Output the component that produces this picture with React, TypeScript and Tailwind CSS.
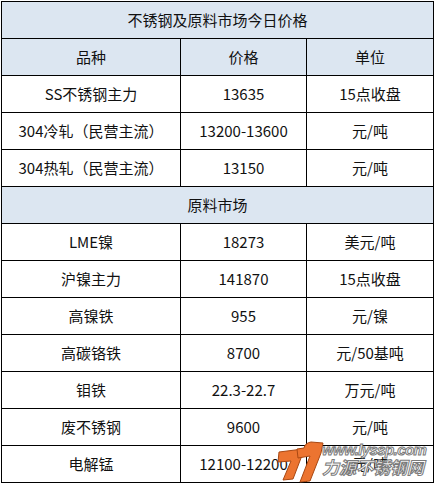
const steelRows = [
  { name: 'SS不锈钢主力', price: '13635', unit: '15点收盘' },
  { name: '304冷轧（民营主流）', price: '13200-13600', unit: '元/吨' },
  { name: '304热轧（民营主流）', price: '13150', unit: '元/吨' },
]

const rawRows = [
  { name: 'LME镍', price: '18273', unit: '美元/吨' },
  { name: '沪镍主力', price: '141870', unit: '15点收盘' },
  { name: '高镍铁', price: '955', unit: '元/镍' },
  { name: '高碳铬铁', price: '8700', unit: '元/50基吨' },
  { name: '钼铁', price: '22.3-22.7', unit: '万元/吨' },
  { name: '废不锈钢', price: '9600', unit: '元/吨' },
  { name: '电解锰', price: '12100-12200', unit: '元/吨' },
]

function Row({ cells }: { cells: string[] }) {
  return (
    <tr className="h-[37px]">
      {cells.map((c, i) => (
        <td key={i} className="border border-black text-center align-middle p-0 whitespace-nowrap">
          {c}
        </td>
      ))}
    </tr>
  )
}

function Watermark() {
  return (
    <>
      {/* 77 logo */}
      <svg
        className="absolute left-[274px] top-[440px] pointer-events-none"
        width="52"
        height="46"
        viewBox="274 440 52 46"
      >
        <path
          d="M279 452 L303 449 L301 458 L293 479 L283 480 L291 461 L278 462 Z"
          fill="#ec7430"
          stroke="#a94812"
          strokeWidth="1"
        />
        <path
          d="M297 449 L304 448 Q305 443 311 442 L323 443 L321 453 L310 481 L300 482 L310 456 L298 458 Z"
          fill="#ec7430"
          stroke="#a94812"
          strokeWidth="1"
        />
      </svg>
      <div className="absolute left-[322px] top-[442px] flex flex-col items-start pointer-events-none italic font-bold leading-none [-webkit-text-stroke:1px_#7a7a7a] text-white">
        <span className="text-[15px] tracking-[-0.6px] font-['Liberation_Sans',sans-serif]">www.lyssp.com</span>
        <span className="text-[17px] font-['Noto_Sans_CJK_SC',sans-serif] mt-[1px]">力源不锈钢网</span>
      </div>
    </>
  )
}

export default function App() {
  return (
    <div className="relative w-[434px] h-[486px] bg-white pl-[1px] pt-[1px] text-[15px] text-[#111] font-['Noto_Sans_CJK_SC',sans-serif]">
      <table className="table-fixed border-collapse w-[432px]">
        <colgroup>
          <col className="w-[179px]" />
          <col className="w-[126px]" />
          <col className="w-[127px]" />
        </colgroup>
        <tbody>
          {/* Title */}
          <tr className="h-[37px] bg-[#dce6f1]">
            <td colSpan={3} className="border border-black text-center align-middle p-0">
              不锈钢及原料市场今日价格
            </td>
          </tr>
          <tr className="h-[37px] bg-[#dce6f1]">
            <td className="border border-black text-center p-0">品种</td>
            <td className="border border-black text-center p-0">价格</td>
            <td className="border border-black text-center p-0">单位</td>
          </tr>
          {steelRows.map((r) => (
            <Row key={r.name} cells={[r.name, r.price, r.unit]} />
          ))}
          <tr className="h-[37px] bg-[#dce6f1]">
            <td colSpan={3} className="border border-black text-center p-0">
              原料市场
            </td>
          </tr>
          {rawRows.map((r) => (
            <Row key={r.name} cells={[r.name, r.price, r.unit]} />
          ))}
        </tbody>
      </table>
      <Watermark />
    </div>
  )
}
